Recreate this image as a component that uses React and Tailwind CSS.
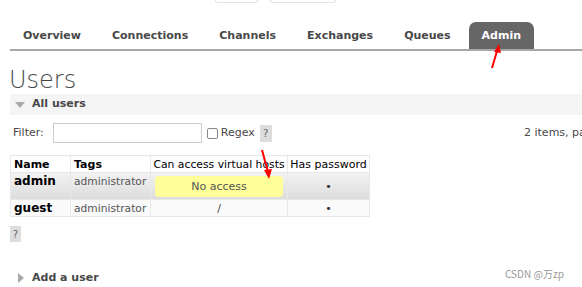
import React from 'react';

export default function App() {
  const tabs = ['Overview', 'Connections', 'Channels', 'Exchanges', 'Queues', 'Admin'];
  const users = [
    { name: 'admin', tags: 'administrator', vhosts: null },
    { name: 'guest', tags: 'administrator', vhosts: '/' },
  ];

  return (
    <div className="relative w-[582px] h-[287px] overflow-hidden bg-white text-[11px] text-[#484848]" style={{ fontFamily: '"DejaVu Sans", Verdana, sans-serif' }}>
      {/* bottoms of header buttons */}
      <div className="flex gap-[12px] ml-[215px] h-[3px]">
        <div className="w-[43px] h-[3px] border-b border-x border-[#e4e4e4] rounded-b-[4px]"></div>
        <div className="w-[66px] h-[3px] border-b border-x border-[#e4e4e4] rounded-b-[4px]"></div>
      </div>

      {/* tabs */}
      <ul className="flex ml-[10px] mt-[20px] border-b-2 border-[#a8a8a8] h-[28px] items-end">
        {tabs.map(t => (
          <li
            key={t}
            className={`mr-[5px] px-[13px] h-[27px] flex items-center pt-[2px] font-bold text-[11px] rounded-t-[7px] ${t === 'Admin' ? 'bg-[#666] text-white' : 'text-[#484848]'}`}
          >
            {t}
          </li>
        ))}
      </ul>

      <h1 className="ml-[9px] mt-[17px] text-[24px] leading-[24px] text-[#484848] font-light">Users</h1>

      {/* section header */}
      <div className="ml-[10px] mt-[2px] h-[21px] bg-[#f5f5f5] flex items-center">
        <span className="ml-[5px] w-0 h-0 border-l-[5px] border-r-[5px] border-t-[6px] border-l-transparent border-r-transparent border-t-[#aaa]"></span>
        <span className="ml-[7px] font-bold text-[11px] text-[#484848]">All users</span>
      </div>

      {/* filter row */}
      <div className="flex items-center ml-[13px] mt-[8px] h-[20px] relative">
        <span className="mr-[9px]">Filter:</span>
        <div className="w-[149px] h-[20px] border border-[#ccc] bg-white"></div>
        <span className="ml-[5px] w-[11px] h-[11px] border border-[#888] rounded-[2px] bg-white"></span>
        <span className="ml-[3px]">Regex</span>
        <span className="ml-[5px] w-[12px] h-[17px] bg-[#ddd] text-[#666] flex items-center justify-center text-[10px]">?</span>
        <span className="absolute left-[511px] top-[2px] whitespace-nowrap">2 items, pa</span>
      </div>

      {/* table */}
      <table className="ml-[10px] mt-[12px] border-collapse table-fixed w-[359px] border border-[#e8e8e8] text-[11px] leading-[15px]">
        <colgroup>
          <col className="w-[60px]" />
          <col className="w-[80px]" />
          <col className="w-[137px]" />
          <col className="w-[82px]" />
        </colgroup>
        <thead>
          <tr className="h-[17px]">
            <th className="text-left font-bold text-black px-[3px] border-r border-[#e8e8e8]">Name</th>
            <th className="text-left font-bold text-black px-[3px] border-r border-[#e8e8e8]">Tags</th>
            <th className="font-normal text-black px-0 border-r border-[#e8e8e8] whitespace-nowrap text-[10.8px]">Can access virtual hosts</th>
            <th className="font-normal text-black px-0 whitespace-nowrap">Has password</th>
          </tr>
        </thead>
        <tbody>
          {users.map((u, i) => (
            <tr key={u.name} className={i === 0 ? 'h-[27px] bg-gradient-to-b from-[#f2f2f2] to-[#dcdcdc]' : 'h-[17px] bg-[#fafafa]'}>
              <td className="px-[3px] align-top pt-[1px] font-bold text-black border-r border-t border-[#e8e8e8] text-[12px]">{u.name}</td>
              <td className="px-[3px] align-top pt-[1px] text-[#555] border-r border-t border-[#e8e8e8] whitespace-nowrap text-[10.7px]">{u.tags}</td>
              <td className="px-[4px] text-center border-r border-t border-[#e8e8e8]">
                {u.vhosts ? u.vhosts : (
                  <div className="h-[21px] bg-[#ffff99] rounded-[4px] flex items-center justify-center text-[#555] text-[11px]">No access</div>
                )}
              </td>
              <td className="text-center border-t border-[#e8e8e8] text-[#333] text-[11px]">•</td>
            </tr>
          ))}
        </tbody>
      </table>

      <div className="ml-[10px] mt-[9px] w-[11px] h-[16px] bg-[#ddd] text-[#666] flex items-center justify-center text-[10px]">?</div>

      {/* collapsed section */}
      <div className="ml-[10px] mt-[28px] flex items-center">
        <span className="ml-[8px] w-0 h-0 border-t-[5px] border-b-[5px] border-l-[6px] border-t-transparent border-b-transparent border-l-[#aaa]"></span>
        <span className="ml-[8px] font-bold text-[11px] text-[#484848]">Add a user</span>
      </div>

      <div className="absolute left-[505px] top-[266px] text-[10px] text-[#999]" style={{ fontFamily: '"Noto Sans CJK SC", sans-serif' }}>CSDN @万zp</div>

      {/* red annotation arrows */}
      <svg className="absolute left-0 top-0" width="582" height="287" viewBox="0 0 582 287">
        <line x1="492" y1="68" x2="497" y2="51" stroke="#f00" strokeWidth="2" />
        <polygon points="499,44 494,52 501,53" fill="#f00" />
        <line x1="262" y1="150" x2="268" y2="172" stroke="#f00" strokeWidth="2" />
        <polygon points="269,179 264,170 272,169" fill="#f00" />
      </svg>
    </div>
  );
}
